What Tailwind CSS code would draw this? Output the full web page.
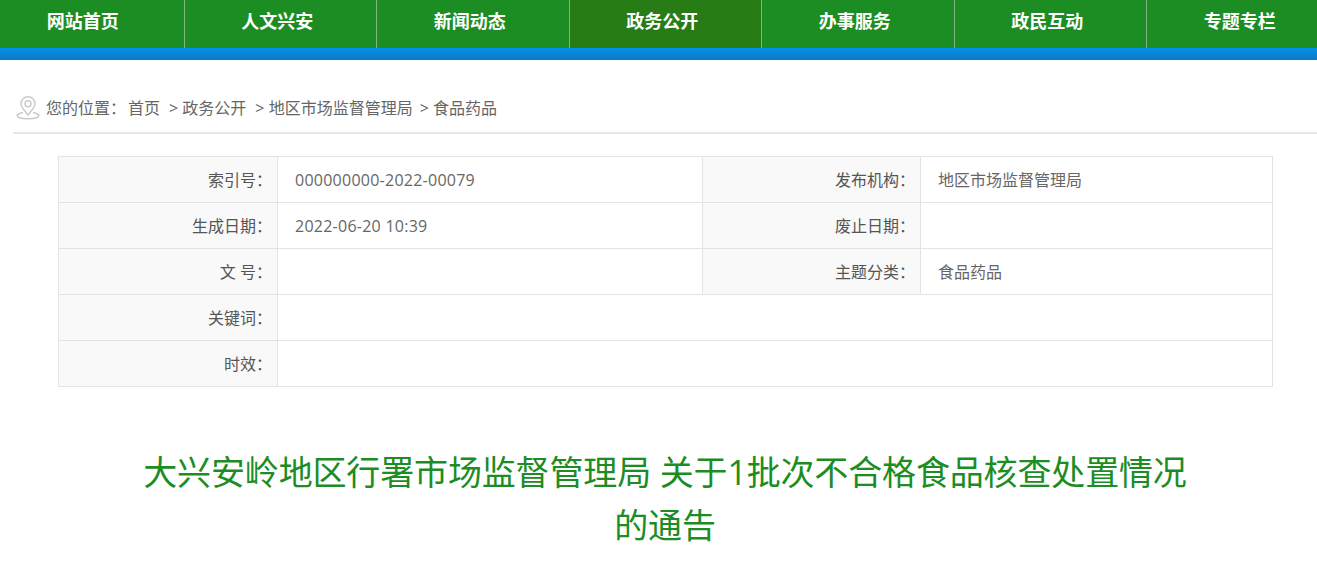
<!DOCTYPE html>
<html lang="zh-CN">
<head>
    <meta charset="UTF-8">
    <meta name="viewport" content="width=device-width, initial-scale=1.0">
    <title>食品药品</title>
    <script src="https://cdn.jsdelivr.net/npm/@tailwindcss/browser@4"></script>
</head>
<body class="h-[562px] overflow-hidden bg-white font-['Open_Sans','Noto_Sans_CJK_SC',sans-serif] text-[#666]">

<!-- nav -->
<nav class="flex h-12 overflow-hidden bg-[#1b8d23] text-[18px] leading-[43px] font-bold text-white">
    <a class="ml-[-8px] w-[192.5px] shrink-0 border-r border-[#7db77f] pr-[10px] text-center">网站首页</a>
    <a class="w-[192.5px] shrink-0 border-r border-[#7db77f] pr-[6px] text-center">人文兴安</a>
    <a class="w-[192.5px] shrink-0 border-r border-[#7db77f] pr-[6px] text-center">新闻动态</a>
    <a class="w-[192.5px] shrink-0 border-r border-[#7db77f] bg-[#277c15] pr-[6px] text-center">政务公开</a>
    <a class="w-[192.5px] shrink-0 border-r border-[#7db77f] pr-[6px] text-center">办事服务</a>
    <a class="w-[192.5px] shrink-0 border-r border-[#7db77f] pr-[6px] text-center">政民互动</a>
    <a class="w-[192.5px] shrink-0 pr-[7px] text-center">专题专栏</a>
</nav>
<div class="h-3 bg-linear-to-b from-[#0091ea] to-[#0f78c2]"></div>

<!-- breadcrumb -->
<div class="mt-[26px] ml-[13px] flex h-[48px] items-center border-b-2 border-[#e6e6e6] pb-[2px] pl-[3px] text-[16px]">
    <svg class="mr-[6px] h-[24px] w-[24px]" viewBox="0 0 24 24" fill="none" stroke="#c9c9c9" stroke-width="1.4">
        <path d="M12 19c-3.500-4.600-7-7.800-7-11.300a7 7 0 0 1 14 0c0 3.500-3.500 6.700-7 11.300z"/>
        <circle cx="12" cy="7.800" r="3"/>
        <path d="M7 16.500c-3 .6-5.800 1.700-5.800 3.300 0 1.800 4.800 3 10.800 3s10.800-1.200 10.800-3c0-1.600-2.800-2.700-5.800-3.300" stroke-width="1.600"/>
    </svg>
    <span>您的位置：</span>
    <span class="ml-[2px]">首页</span>
    <span class="ml-[9px]">&gt; 政务公开</span>
    <span class="ml-[9px]">&gt; 地区市场监督管理局</span>
    <span class="ml-[7px]">&gt; 食品药品</span>
</div>

<!-- info table -->
<table class="mt-[22px] ml-[58px] w-[1215px] table-fixed border-collapse text-[16px] [&_td]:h-[46px] [&_td]:border [&_td]:border-[#e3e3e3] [&_td]:px-[17px]">
    <colgroup>
        <col class="w-[219px]"><col class="w-[425px]"><col class="w-[218px]"><col>
    </colgroup>
    <tbody>
        <tr>
            <td class="bg-[#f9f9f9] !pr-[5px] text-right text-[#555]">索引号：</td>
            <td class="tracking-[0.25px]">000000000-2022-00079</td>
            <td class="bg-[#f9f9f9] !pr-[5px] text-right text-[#555]">发布机构：</td>
            <td>地区市场监督管理局</td>
        </tr>
        <tr>
            <td class="bg-[#f9f9f9] !pr-[5px] text-right text-[#555]">生成日期：</td>
            <td class="tracking-[0.25px]">2022-06-20 10:39</td>
            <td class="bg-[#f9f9f9] !pr-[5px] text-right text-[#555]">废止日期：</td>
            <td></td>
        </tr>
        <tr>
            <td class="bg-[#f9f9f9] !pr-[5px] text-right text-[#555]">文 号：</td>
            <td></td>
            <td class="bg-[#f9f9f9] !pr-[5px] text-right text-[#555]">主题分类：</td>
            <td>食品药品</td>
        </tr>
        <tr>
            <td class="bg-[#f9f9f9] !pr-[5px] text-right text-[#555]">关键词：</td>
            <td colspan="3"></td>
        </tr>
        <tr>
            <td class="bg-[#f9f9f9] !pr-[5px] text-right text-[#555]">时效：</td>
            <td colspan="3"></td>
        </tr>
    </tbody>
</table>

<!-- title -->
<h1 class="mt-[59px] ml-[135px] w-[1060px] text-center text-[34px] leading-[53px] tracking-[-0.15px] font-normal text-[#1b8d23]">大兴安岭地区行署市场监督管理局 关于1批次不合格食品核查处置情况的通告</h1>

</body>
</html>
